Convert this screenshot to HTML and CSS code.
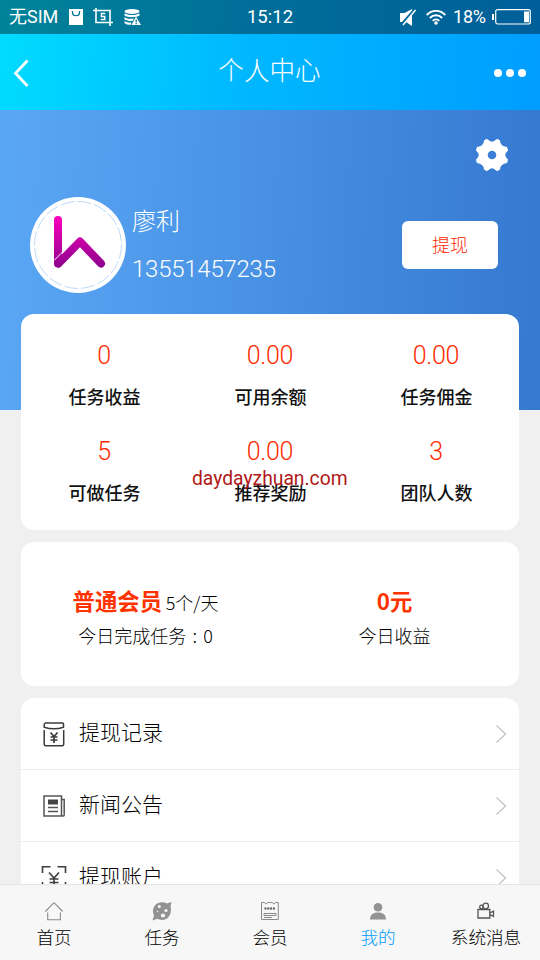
FILE: index.html
```html
<!DOCTYPE html>
<html lang="zh-CN">
<head>
<meta charset="utf-8">
<title>个人中心</title>
<link rel="stylesheet" href="styles.css">
</head>
<body>
<div class="app">
  <header class="top">
    <div class="status">
      <div class="status-left">
        <span class="sim">无SIM</span>
        <svg class="i-bag" width="14" height="16" viewBox="0 0 14 16"><path fill="#fff" d="M0 0H14V16H0z"/><path d="M3.500 2v1.500a3.500 3.200 0 0 0 7 0V2" fill="none" stroke="#007396" stroke-width="1.300"/></svg>
        <svg class="i-crop" width="20" height="18" viewBox="0 0 20 18" fill="none" stroke="#fff" stroke-width="1.600"><path d="M3 0v14.500h17M0 2.500h17V18"/><path d="M12.200 5.500H8.400v3h3.400v3H7.800" stroke-width="1.400"/></svg>
        <svg class="i-db" width="17" height="16" viewBox="0 0 17 16"><g fill="#fff"><ellipse cx="8" cy="2.500" rx="7.500" ry="2.500"/><path d="M.5 4.200C3 6.600 13 6.600 15.500 4.200V6.500C13 8.800 3 8.800.5 6.500zM.5 8c2 2 7 2 9.500 1.700L8.500 12C5 12.200 2 11.500.5 10.500zM.5 12c2 1.500 5 1.700 7 1.500L6.800 15.800C4 15.800 1.500 15.300.5 14z"/><path d="M12 7.500 17 16H7.500z"/></g><path d="M12.200 10.500v2.700M12.200 14v1.200" stroke="#007396" stroke-width="1.300"/></svg>
      </div>
      <span class="clock">15:12</span>
      <div class="status-right">
        <svg class="i-mute" width="17" height="17" viewBox="0 0 17 17"><path fill="#fff" d="M0 4h4.500L12 0v1.500L2 13H0zM12 5.500V17L6 13z"/><path d="M15.500 1 3 16" stroke="#fff" stroke-width="1.500"/></svg>
        <svg class="i-wifi" width="20" height="15" viewBox="0 0 20 15" fill="none" stroke="#fff" stroke-width="1.900"><path d="M.7 5C6-.5 14-.5 19.300 5M3.800 8c3.500-3.600 8.900-3.600 12.400 0M6.700 10.900c2-2 4.600-2 6.600 0"/><circle cx="10" cy="13" r="1.800" fill="#fff" stroke="none"/></svg>
        <span class="pct">18%</span>
        <svg class="i-bat" width="39" height="16" viewBox="0 0 39 16"><rect x="3.700" y=".7" width="34.600" height="14.300" rx="2" fill="none" stroke="#fff" stroke-width="1.200"/><path fill="#fff" d="M0 5h2v6H0zM32 2.500h5v10.700h-5z"/></svg>
      </div>
    </div>
    <div class="nav">
      <svg class="back" width="16" height="28" viewBox="0 0 16 28"><path d="M14.500 1.500 2.500 14.200 14.500 27" fill="none" stroke="#fff" stroke-width="2.800"/></svg>
      <h1>个人中心</h1>
      <svg class="more" width="32" height="8" viewBox="0 0 32 8" fill="#fff"><circle cx="4" cy="4" r="4"/><circle cx="16" cy="4" r="4"/><circle cx="28" cy="4" r="4"/></svg>
    </div>
  </header>

  <main class="page">
    <div class="tools">
      <svg width="32" height="32" viewBox="-16 -16 32 32"><path fill="#fff" d="M-6.500-15.500Q-5-16.500-3.500-15Q0-11.500 3.500-15Q5-16.500 6.500-15.500L8-14.500Q8-9 15-8L16-5Q16-4 15-3.500Q11.500 0 15 3.500Q16 4 16 5L15 8Q8 9 8 14.500L6.500 15.500Q5 16.500 3.500 15Q0 11.500-3.500 15Q-5 16.500-6.500 15.500L-8 14.500Q-8 9-15 8L-16 5Q-16 4-15 3.500Q-11.500 0-15-3.500Q-16-4-16-5L-15-8Q-8-9-8-14.500z"/><circle r="4.300" fill="#3b80d6"/></svg>
    </div>
    <section class="profile">
      <svg class="avatar" width="96" height="96" viewBox="0 0 96 96">
        <defs><linearGradient id="pk" gradientUnits="userSpaceOnUse" x1="0" y1="18" x2="0" y2="72"><stop offset="0" stop-color="#ff00bf"/><stop offset="1" stop-color="#8a008c"/></linearGradient></defs>
        <circle cx="48" cy="48" r="48" fill="#fff"/>
        <circle cx="48" cy="48" r="43.500" fill="none" stroke="#a9cff5" stroke-width=".8" stroke-dasharray="14 3"/>
        <g fill="none" stroke="url(#pk)" stroke-width="8" stroke-linecap="round" stroke-linejoin="round"><path d="M28 23v38.500l.01 5"/><path d="M28.500 66.500 50 44.500 71 66.500"/></g>
        <path d="M24 63.500 32.500 55" stroke="#fff" stroke-width="1"/>
      </svg>
      <div class="who"><div class="name">廖利</div><div class="phone">13551457235</div></div>
      <button class="cash">提现</button>
    </section>

    <section class="card stats">
      <div class="stat"><b>0</b><span>任务收益</span></div>
      <div class="stat"><b>0.00</b><span>可用余额</span></div>
      <div class="stat"><b>0.00</b><span>任务佣金</span></div>
      <div class="stat"><b>5</b><span>可做任务</span></div>
      <div class="stat"><b>0.00</b><span>推荐奖励</span></div>
      <div class="stat"><b>3</b><span>团队人数</span></div>
      <div class="mark">daydayzhuan.com</div>
    </section>

    <section class="card today">
      <div class="half"><p class="big"><strong>普通会员</strong> <span class="per">5个/天</span></p><p class="sub">今日完成任务<span class="colon">:</span><span class="zero">0</span></p></div>
      <div class="half"><p class="big"><strong>0元</strong></p><p class="sub">今日收益</p></div>
    </section>

    <section class="card menu">
      <a class="row">
        <svg class="ic" width="26" height="26" viewBox="0 0 26 26" fill="none" stroke="#3c3c3c" stroke-width="1.500"><path d="M4.500 2h17.300l.7 1v3.200Q13 9.500 3.200 6.200V3zM3.200 9v14.200q0 1.500 1.500 1.500h16.500q1.500 0 1.500-1.500V9"/><path d="m9.500 11.500 3.500 4 3.500-4M13 15.500V22M9.500 16h7M9.500 19h7" stroke-width="1.700"/></svg>
        <span>提现记录</span>
        <svg class="go" width="12" height="20" viewBox="0 0 12 20"><path d="M1.500 1.500 10.500 10 1.500 18.500" fill="none" stroke="#c4c4c4" stroke-width="1.300"/></svg>
      </a>
      <a class="row">
        <svg class="ic" width="26" height="26" viewBox="0 0 26 26" fill="none" stroke="#555" stroke-width="1.500"><path d="M3 3h17.500v20H3zM20.500 6.500h2.700V22q0 1-1 1H19M20.500 14V3"/><path d="M7 6.500h10v5H7z" fill="#444" stroke="none"/><path d="M7 14.500h10M7 18.500h10"/></svg>
        <span>新闻公告</span>
        <svg class="go" width="12" height="20" viewBox="0 0 12 20"><path d="M1.500 1.500 10.500 10 1.500 18.500" fill="none" stroke="#c4c4c4" stroke-width="1.300"/></svg>
      </a>
      <a class="row">
        <svg class="ic" width="26" height="26" viewBox="0 0 26 26" fill="none" stroke="#3c3c3c" stroke-width="1.600"><path d="M1.500 8V1.700h8M16.500 1.700h8V8M1.500 17v7h8M16.500 24h8v-7"/><path d="m8 7.500 5 5.500 5-5.500M13 13v9M8.500 14h9M8.500 17.500h9"/></svg>
        <span>提现账户</span>
        <svg class="go" width="12" height="20" viewBox="0 0 12 20"><path d="M1.500 1.500 10.500 10 1.500 18.500" fill="none" stroke="#c4c4c4" stroke-width="1.300"/></svg>
      </a>
    </section>
  </main>

  <nav class="tabs">
    <a class="tab"><svg width="20" height="20" viewBox="0 0 20 20" fill="none" stroke="#8a8a8a" stroke-width="1.100"><path d="M1.300 10.500 10 1.700l8.700 8.800M3.700 11.500v7.300h12.700v-7.300"/></svg><span>首页</span></a>
    <a class="tab"><svg width="20" height="20" viewBox="0 0 20 20"><path d="M10 1.200c2 0 3.500.5 4.800 1.400L19.500 1 18.500 5.500c1.500 5-.5 13.300-8.500 13.500-2 0-3.500-.5-4.800-1.200L.5 19.500 2 14.500C-1 8 3 1.200 10 1.200z" fill="#929292"/><g fill="#f7f7f7"><circle cx="7.300" cy="5.500" r="1.500"/><circle cx="14" cy="9.500" r="1.600"/><circle cx="5.500" cy="10.500" r=".7"/><circle cx="11" cy="14.500" r="2.100"/></g></svg><span>任务</span></a>
    <a class="tab"><svg width="20" height="20" viewBox="0 0 20 20" fill="none" stroke="#8a8a8a" stroke-width="1"><path d="M1.500 1.500h3q.5 1.300 1.500 1.300T7.500 1.500h5q.5 1.300 1.500 1.300t1.500-1.300h2.800v17H1.500zM4 12.500h12v2H4zM4 16.500h8"/><path d="M4.500 7.500h11" stroke="#555" stroke-width="2.200" stroke-dasharray="2 .8"/></svg><span>会员</span></a>
    <a class="tab on"><svg width="20" height="20" viewBox="0 0 20 20" fill="#929292"><circle cx="10" cy="6.300" r="4.300"/><path d="M2 18.500c0-4.500 3-7 8-7s8 2.500 8 7z"/></svg><span>我的</span></a>
    <a class="tab"><svg width="20" height="20" viewBox="0 0 20 20" fill="none" stroke="#555" stroke-width="1.300"><path d="M2 8.500h11.800v8.500H2zM14 12l3.500-2v5.500L14 13.700"/><circle cx="5.500" cy="6" r="1.800"/><circle cx="9.700" cy="5" r="2.800"/></svg><span>系统消息</span></a>
  </nav>
</div>
</body>
</html>
```
FILE: styles.css
```css
* { box-sizing: border-box; }
html, body { margin: 0; }
body { font-family: "Noto Sans CJK SC", sans-serif; font-weight: 300; color: #000; }
h1, p { margin: 0; font-weight: 300; }
svg { display: block; flex: none; }
.app { width: 540px; height: 960px; display: flex; flex-direction: column; overflow: hidden; background: #f0f0f0; }

.top { flex: none; height: 110px; background: linear-gradient(96deg, #00dcff 0%, #00b8ff 45%, #009dff 100%); color: #fff; }
.status { height: 34px; display: grid; grid-template-columns: 1fr auto 1fr; align-items: center; padding: 0 9px; background: rgba(0, 0, 0, .4); font: 400 18px/34px Roboto, "Noto Sans CJK SC", sans-serif; }
.status-left, .status-right { display: flex; align-items: center; }
.status-right { justify-content: flex-end; }
.sim { width: 49px; white-space: nowrap; }
.i-bag { margin-left: 11px; }
.i-crop { margin-left: 10px; }
.i-db { margin-left: 11px; }
.clock { font-size: 18.500px; }
.i-wifi { margin-left: 9px; }
.pct { margin-left: 7px; width: 34px; white-space: nowrap; letter-spacing: -.2px; }
.i-bat { margin-left: 5px; }

.nav { height: 76px; display: grid; grid-template-columns: 1fr auto 1fr; align-items: center; padding: 0 14px 0 13px; }
.nav h1 { font-size: 25.600px; line-height: 70px; padding-bottom: 6px; }
.more { justify-self: end; margin-top: 2px; }
.back { margin-top: 2px; }

.page { flex: 1; min-height: 0; overflow: hidden; padding: 0 21px; background: linear-gradient(92deg, #5aa7f5 0%, #3579d0 100%) 0 0 / 100% 300px no-repeat; }
.tools { display: flex; justify-content: flex-end; padding: 29px 11px 0 0; height: 87px; }
.profile { display: flex; height: 117px; padding: 0 21px 0 9px; align-items: flex-start; color: #fff; }
.who { margin-left: 6px; flex: 1; }
.name { font-size: 24px; line-height: 46px; height: 48px; }
.phone { font: 300 24px/48px Roboto, sans-serif; letter-spacing: -.25px; }
.cash { margin-top: 24px; width: 96px; height: 48px; border: 0; border-radius: 6px; background: #fff; color: #ff2a00; font: 300 18px/44px "Noto Sans CJK SC", sans-serif; padding: 0 0 2px; }

.card { background: #fff; border-radius: 13px; margin-bottom: 12px; }
.stats { position: relative; height: 216px; padding-top: 18px; display: grid; grid-template-columns: repeat(3, 1fr); grid-auto-rows: 96px; }
.stat { text-align: center; }
.stat b { display: block; font: 300 25px/48px Roboto, sans-serif; letter-spacing: -.3px; color: #ff2a00; }
.stat span { display: block; font-size: 18px; line-height: 32px; font-weight: 500; color: #111; padding-left: 1px; }
.mark { position: absolute; left: 171px; top: 151px; font: 400 19.300px/28px Roboto, sans-serif; color: #b01818; }

.today { height: 144px; display: grid; grid-template-columns: 1fr 1fr; padding-top: 41px; text-align: center; }
.big { line-height: 34px; height: 36px; }
.big strong { font-size: 22.400px; font-weight: 700; color: #ff3300; }
.per { font-size: 18px; }
.sub { font-size: 18px; line-height: 32px; }
.colon { display: inline-block; width: 17px; text-align: center; }

.menu { height: 216px; }
.row { display: flex; align-items: center; height: 72px; padding: 0 12px 0 20px; border-bottom: 1px solid #ebebeb; }
.row span { flex: 1; margin-left: 12px; font-size: 21px; line-height: 66px; padding-bottom: 5px; }
.ic, .go { margin-top: 1px; }

.tabs { flex: none; height: 76px; display: grid; grid-template-columns: repeat(5, 1fr); background: #f7f7f7; border-top: 1px solid #e4e4e4; }
.tab { display: flex; flex-direction: column; align-items: center; padding-top: 16px; }
.tab span { font-size: 17.600px; line-height: 32px; white-space: nowrap; }
.on span { color: #009dff; }
```
